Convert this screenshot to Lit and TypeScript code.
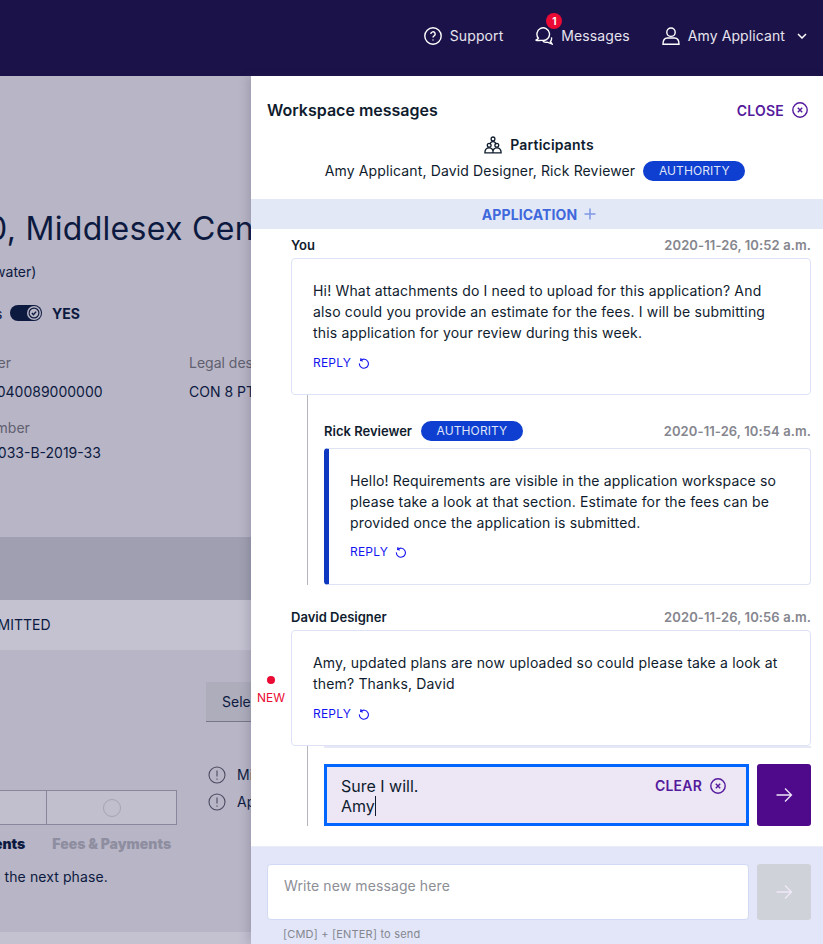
import { css, html, LitElement, svg } from "lit";
import { customElement } from "lit/decorators.js";

const closeIcon = html`<svg class="x-icon" viewBox="0 0 16 16">
  <circle cx="8" cy="8" r="7.2" /><path d="M5.8 5.8l4.4 4.4M10.2 5.8l-4.4 4.4" />
</svg>`;

const replyIcon = html`<svg class="reply-icon" viewBox="0 0 12 12">
  <path d="M3 1.2L2.6 3.6 5 4M2.6 3.6A4.5 4.5 0 1 1 1.4 6.4" />
</svg>`;

const arrow = svg`<path d="M1.5 9h15M10 2.5L16.5 9 10 15.5" />`;

@customElement("app-root")
class AppRoot extends LitElement {
  renderReply() {
    return html`<a class="reply">REPLY ${replyIcon}</a>`;
  }

  renderHeader() {
    return html`<header>
      <a class="nav">
        <svg viewBox="0 0 18 18"><circle cx="9" cy="9" r="8.2" /><path d="M6.8 7a2.2 2.2 0 1 1 3.3 1.9c-.7.4-1.1.8-1.1 1.6" /><path d="M9 12.6v.8" /></svg>
        <span>Support</span>
      </a>
      <a class="nav messages">
        <span class="badge">1</span>
        <svg viewBox="0 0 18 18"><path d="M3.4 11.2A6.3 6.3 0 1 1 7.6 13.4C5.5 13.4 3 13.6.6 13.2c1.3-.3 2.2-1 2.8-2z" /><path d="M7.6 13.4c.8 1.5 2.6 2.3 4.6 1.8l4.8 1.8-1.6-2.6c1-1 1.4-2.6 1-4" /></svg>
        <span>Messages</span>
      </a>
      <a class="nav user">
        <svg viewBox="0 0 18 18"><circle cx="9" cy="5.2" r="4.2" /><path d="M1 17.2c0-4.4 2-6.2 4.4-6.2h7.2c2.4 0 4.4 1.8 4.4 6.2z" /></svg>
        <span>Amy Applicant</span>
        <svg class="chevron" viewBox="0 0 10 6"><path d="M1 1l4 4 4-4" /></svg>
      </a>
    </header>`;
  }

  renderPage() {
    return html`<section class="page">
      <h1>0, Middlesex Centre</h1>
      <p class="sub">(water)</p>
      <div class="toggle-row">
        <span class="s">s</span>
        <span class="toggle"><svg viewBox="0 0 12 12"><circle cx="6" cy="6" r="6" fill="#b8b5c6" /><circle cx="6" cy="6" r="4.2" fill="none" stroke="#0c1a3f" /><path d="M4.2 6.1l1.3 1.3 2.3-2.6" fill="none" stroke="#0c1a3f" stroke-width="1.2" /></svg></span>
        <b>YES</b>
      </div>
      <div class="facts">
        <span class="k k1">ber</span><span class="k">Legal description</span>
        <span class="v v1">1040089000000</span><span class="v">CON 8 PT LOT</span>
      </div>
      <div class="facts two">
        <span class="k k2">number</span><span></span>
        <span class="v v2">0033-B-2019-33</span><span></span>
      </div>
      <div class="band"></div>
      <div class="status">SUBMITTED</div>
      <div class="lower">
        <div class="lower-left">
          <div class="steps"><span></span><span><i></i></span></div>
          <div class="tabs"><b>ents</b><b class="off">Fees &amp; Payments</b></div>
          <p class="phase">o the next phase.</p>
        </div>
        <div class="lower-right">
          <div class="select">Select</div>
          <div class="alert"><svg viewBox="0 0 18 18"><circle cx="9" cy="9" r="8" /><path d="M9 4.5v6M9 12.5v1.2" /></svg>Missing</div>
          <div class="alert"><svg viewBox="0 0 18 18"><circle cx="9" cy="9" r="8" /><path d="M9 4.5v6M9 12.5v1.2" /></svg>Application</div>
        </div>
      </div>
      <div class="page-foot"></div>
    </section>`;
  }

  renderPanel() {
    return html`<aside class="panel">
      <div class="panel-head">
        <h2>Workspace messages</h2>
        <a class="close">CLOSE ${closeIcon}</a>
      </div>
      <div class="participants">
        <div class="p-title">
          <svg viewBox="0 0 18 18"><circle cx="9" cy="2.9" r="1.9" /><path d="M6.2 8.6c0-2 1-3 2.8-3s2.8 1 2.8 3" /><circle cx="5.2" cy="9.2" r="1.9" /><circle cx="12.8" cy="9.2" r="1.9" /><path d="M.9 16.8c0-3 1.6-4.9 4.3-4.9s4.3 1.9 3.8 4.9zM9 16.8c-.5-3 1.1-4.9 3.8-4.9s4.3 1.9 4.3 4.9z" /></svg>
          Participants
        </div>
        <div class="p-names">Amy Applicant, David Designer, Rick Reviewer <span class="pill">AUTHORITY</span></div>
      </div>
      <div class="application">APPLICATION <svg viewBox="0 0 12 12"><path d="M6 .5v11M.5 6h11" /></svg></div>

      <div class="messages-list">
        <div class="meta"><b>You</b><time>2020-11-26, 10:52 a.m.</time></div>
        <div class="card">
          <p>Hi! What attachments do I need to upload for this application? And also could you provide an estimate for the fees. I will be submitting this application for your review during this week.</p>
          ${this.renderReply()}
        </div>
        <div class="thread first">
          <div class="meta"><b>Rick Reviewer</b><span class="pill">AUTHORITY</span><time>2020-11-26, 10:54 a.m.</time></div>
          <div class="card authority">
            <p>Hello! Requirements are visible in the application workspace so please take a look at that section. Estimate for the fees can be provided once the application is submitted.</p>
            ${this.renderReply()}
          </div>
        </div>
        <div class="meta david"><b>David Designer</b><time>2020-11-26, 10:56 a.m.</time></div>
        <div class="card new">
          <div class="new-flag"><i></i>NEW</div>
          <p>Amy, updated plans are now uploaded so could please take a look at them? Thanks, David</p>
          ${this.renderReply()}
        </div>
        <div class="thread last">
          <div class="strip"></div>
          <div class="composer">
            <div class="draft">
              <div>Sure I will.<br />Amy<span class="caret"></span></div>
              <a class="clear">CLEAR ${closeIcon}</a>
            </div>
            <button class="send"><svg viewBox="0 0 18 18">${arrow}</svg></button>
          </div>
        </div>
      </div>

      <footer>
        <div class="new-row">
          <div class="input">Write new message here</div>
          <button class="send off"><svg viewBox="0 0 18 18">${arrow}</svg></button>
        </div>
        <div class="hint">[CMD] + [ENTER] to send</div>
      </footer>
    </aside>`;
  }

  render() {
    return html`${this.renderHeader()}
      <main>${this.renderPage()}${this.renderPanel()}</main>`;
  }

  static styles = css`
    :host {
      display: block;
      width: 823px;
      height: 944px;
      overflow: hidden;
      font-family: Inter, "Liberation Sans", sans-serif;
      font-size: 14px;
      color: #0f1c2e;
    }
    header {
      height: 76px;
      box-sizing: border-box;
      background: #1b1249;
      color: #e6e4ee;
      display: flex;
      justify-content: flex-end;
      align-items: center;
      gap: 32px;
      padding: 0 16px 4px 0;
    }
    .nav {
      display: flex;
      align-items: center;
      gap: 8px;
      letter-spacing: 0.1px;
      position: relative;
    }
    .nav > span:not(.badge) {
      margin-top: -2px;
    }
    .nav svg {
      width: 18px;
      height: 18px;
      fill: none;
      stroke: #fff;
      stroke-width: 1.4;
    }
    .nav .chevron {
      width: 10px;
      height: 6px;
      margin-left: 4px;
      stroke-width: 1.5;
    }
    .badge {
      position: absolute;
      left: 11px;
      top: -14px;
      width: 16px;
      height: 16px;
      border-radius: 50%;
      background: #ea0a33;
      color: #fff;
      font-size: 10px;
      font-weight: 700;
      line-height: 16px;
      text-align: center;
      letter-spacing: 0;
    }
    main {
      display: flex;
      height: 868px;
    }

    .page {
      width: 251px;
      flex: none;
      overflow: hidden;
      background: #b8b5c6;
      color: #0c1a3f;
      white-space: nowrap;
    }
    h1 {
      margin: 133px 0 0 -13px;
      font-size: 32px;
      font-weight: 400;
      line-height: 40px;
      letter-spacing: 0.3px;
    }
    .sub {
      margin: 13px 0 0 -11px;
      line-height: 20px;
    }
    .toggle-row {
      margin: 21px 0 0 -5px;
      height: 20px;
      display: flex;
      align-items: center;
      font-weight: 400;
    }
    .toggle-row .s {
      width: 15px;
    }
    .toggle {
      width: 32px;
      height: 16px;
      border-radius: 8px;
      background: #0c1a3f;
      display: flex;
      justify-content: flex-end;
      align-items: center;
      padding-right: 1px;
      box-sizing: border-box;
      margin-right: 10px;
    }
    .toggle svg {
      width: 14px;
      height: 14px;
    }
    .toggle-row b {
      font-weight: 700;
    }
    .facts {
      margin-top: 30px;
      display: grid;
      grid-template-columns: 189px 1fr;
      row-gap: 9px;
      line-height: 20px;
    }
    .facts.two {
      margin-top: 16px;
      row-gap: 5px;
    }
    .k {
      color: #60606f;
    }
    .k1 {
      margin-left: -11px;
    }
    .k2 {
      margin-left: -21px;
    }
    .v1 {
      margin-left: -9px;
    }
    .v2 {
      margin-left: -11px;
    }
    .band {
      height: 63px;
      margin-top: 74px;
      background: #9f9fb1;
    }
    .status {
      height: 50px;
      line-height: 50px;
      background: #c4c2d1;
      margin-left: -31px;
    }
    .lower {
      display: flex;
      height: 282px;
    }
    .lower-left {
      width: 206px;
      flex: none;
      padding-top: 140px;
    }
    .steps {
      width: 177px;
      height: 35px;
      display: flex;
      border: 1px solid #87869a;
      border-left: 0;
      box-sizing: border-box;
      background: #c1bfce;
    }
    .steps span {
      display: flex;
      align-items: center;
      justify-content: center;
    }
    .steps span:first-child {
      width: 46px;
      border-right: 1px solid #87869a;
    }
    .steps span:last-child {
      flex: 1;
    }
    .steps i {
      width: 18px;
      height: 18px;
      box-sizing: border-box;
      border: 1.5px solid #a5a4b5;
      border-radius: 50%;
    }
    .tabs {
      display: flex;
      margin-top: 9px;
      line-height: 20px;
      gap: 27px;
      margin-left: -6px;
      font-weight: 700;
    }
    .tabs .off {
      color: #8e8ea0;
    }
    .phase {
      margin: 13px 0 0 -8px;
      line-height: 20px;
      letter-spacing: 0.1px;
    }
    .lower-right {
      padding-top: 32px;
    }
    .select {
      width: 90px;
      height: 40px;
      line-height: 40px;
      padding-left: 16px;
      background: #aeadbc;
      border-bottom: 1px solid #76768a;
      box-sizing: border-box;
    }
    .alert {
      display: flex;
      align-items: center;
      gap: 11px;
      height: 27px;
      padding-left: 2px;
      letter-spacing: 0.2px;
    }
    .select + .alert {
      margin-top: 39px;
    }
    .alert svg {
      width: 18px;
      height: 18px;
      fill: none;
      stroke: #4a4a60;
      stroke-width: 1.1;
      flex: none;
    }
    .page-foot {
      height: 12px;
      background: #c4c2d1;
    }

    .panel {
      width: 572px;
      flex: none;
      background: #fff;
      position: relative;
      box-shadow: -4px 0 8px rgba(60, 60, 90, 0.18);
      display: flex;
      flex-direction: column;
    }
    .panel-head {
      display: flex;
      justify-content: space-between;
      align-items: center;
      padding: 24px 15px 0 16px;
      height: 20px;
    }
    h2 {
      margin: 0;
      font-size: 16px;
      font-weight: 600;
      line-height: 20px;
    }
    .close,
    .clear {
      display: flex;
      align-items: center;
      gap: 8px;
      color: #541a9c;
      font-weight: 600;
      letter-spacing: 0.2px;
    }
    .x-icon {
      width: 16px;
      height: 16px;
      fill: none;
      stroke: #541a9c;
      stroke-width: 1.4;
    }
    .participants {
      text-align: center;
      margin-top: 15px;
    }
    .p-title {
      display: flex;
      justify-content: center;
      align-items: center;
      gap: 8px;
      font-weight: 600;
      line-height: 20px;
      letter-spacing: 0.2px;
      padding-left: 4px;
    }
    .p-title svg {
      width: 18px;
      height: 18px;
      fill: none;
      stroke: #0f1c2e;
      stroke-width: 1.3;
    }
    .p-names {
      margin-top: 6px;
      line-height: 20px;
      display: flex;
      justify-content: center;
      align-items: center;
      gap: 8px;
      letter-spacing: 0.14px;
      padding-right: 4px;
    }
    .pill {
      display: inline-block;
      width: 102px;
      height: 20px;
      line-height: 20px;
      border-radius: 10px;
      background: #0f3fd1;
      color: #dfe4f8;
      font-size: 12px;
      text-align: center;
      letter-spacing: 0.1px;
    }
    .application {
      margin-top: 18px;
      height: 30px;
      flex: none;
      box-sizing: border-box;
      padding-left: 4px;
      background: #e3e8f7;
      color: #3f68dc;
      font-weight: 700;
      letter-spacing: 0.1px;
      display: flex;
      justify-content: center;
      align-items: center;
      gap: 7px;
    }
    .application svg {
      width: 12px;
      height: 12px;
      fill: none;
      stroke: #7d97e4;
      stroke-width: 1.5;
    }

    .messages-list {
      flex: 1;
      padding: 0 12px 0 40px;
      overflow: hidden;
    }
    .meta {
      display: flex;
      align-items: center;
      font-size: 13px;
      line-height: 20px;
      height: 20px;
      margin-top: 6px;
      margin-bottom: 3px;
    }
    .meta b {
      font-weight: 600;
    }
    .meta .pill {
      margin-left: 9px;
    }
    .meta time {
      margin-left: auto;
      color: #85868e;
      font-weight: 600;
      letter-spacing: 0.1px;
    }
    .card {
      border: 1px solid #dde3f5;
      border-radius: 4px;
      padding: 21px 21px 21px;
      position: relative;
      background: #fff;
    }
    .card p {
      margin: 0 0 10px;
      line-height: 21px;
      letter-spacing: 0.17px;
    }
    .reply {
      display: flex;
      align-items: center;
      gap: 7px;
      color: #1414f0;
      font-size: 12px;
      line-height: 20px;
      height: 20px;
      letter-spacing: 0.2px;
    }
    .reply-icon {
      width: 12px;
      height: 12px;
      fill: none;
      stroke: #1414f0;
      stroke-width: 1.1;
    }
    .thread {
      margin-left: 16px;
      border-left: 1px solid #b5b5c0;
      padding-left: 16px;
    }
    .thread.first {
      padding-top: 20px;
    }
    .thread.first .meta {
      margin-top: 5px;
      margin-bottom: 7px;
      height: 21px;
    }
    .card.authority {
      border-left: 5px solid #0f38c0;
      padding: 21px 21px 22px;
    }
    .card.authority p {
      margin-bottom: 9px;
      letter-spacing: 0.14px;
    }
    .meta.david {
      margin-top: 22px;
    }
    .new-flag {
      position: absolute;
      left: -41px;
      top: 45px;
      width: 40px;
      text-align: center;
      color: #ea0a33;
      font-size: 12px;
      line-height: 16px;
    }
    .new-flag i {
      display: block;
      width: 8px;
      height: 8px;
      border-radius: 50%;
      background: #ea0a33;
      margin: 0 auto 6px;
    }
    .thread.last {
      height: 80px;
      box-sizing: border-box;
    }
    .strip {
      height: 2px;
      margin-bottom: 16px;
      background: #e6e9f5;
    }
    .composer {
      display: flex;
      gap: 8px;
      height: 62px;
    }
    .draft {
      width: 425px;
      box-sizing: border-box;
      border: 3px solid #0066ff;
      background: #ece6f5;
      padding: 9px 14px;
      display: flex;
      justify-content: space-between;
      font-size: 16px;
      line-height: 20px;
    }
    .draft .clear {
      font-size: 14px;
      height: 20px;
      margin-right: 6px;
    }
    .caret {
      display: inline-block;
      width: 1px;
      height: 20px;
      background: #0f1c2e;
      vertical-align: -4px;
    }
    .send {
      width: 54px;
      padding: 0;
      border: 0;
      border-radius: 3px;
      background: #4f0a8c;
      display: flex;
      align-items: center;
      justify-content: center;
    }
    .send svg {
      width: 18px;
      height: 18px;
      fill: none;
      stroke: #f0e8f8;
      stroke-width: 1.3;
    }
    .send.off {
      background: #cfd2d8;
    }
    footer {
      height: 98px;
      flex: none;
      box-sizing: border-box;
      background: #e2e6f8;
      border-top: 1px solid #eceef7;
      padding: 17px 12px 0 16px;
    }
    .new-row {
      display: flex;
      gap: 8px;
      height: 56px;
    }
    .input {
      width: 482px;
      box-sizing: border-box;
      background: #fff;
      border: 1px solid #d2daf3;
      border-radius: 4px;
      padding: 11px 16px;
      line-height: 20px;
      color: #8c8e96;
      letter-spacing: 0.1px;
    }
    .hint {
      margin: 7px 0 0 16px;
      font-size: 11px;
      line-height: 14px;
      color: #85878f;
      letter-spacing: 0.2px;
    }
  `;
}
